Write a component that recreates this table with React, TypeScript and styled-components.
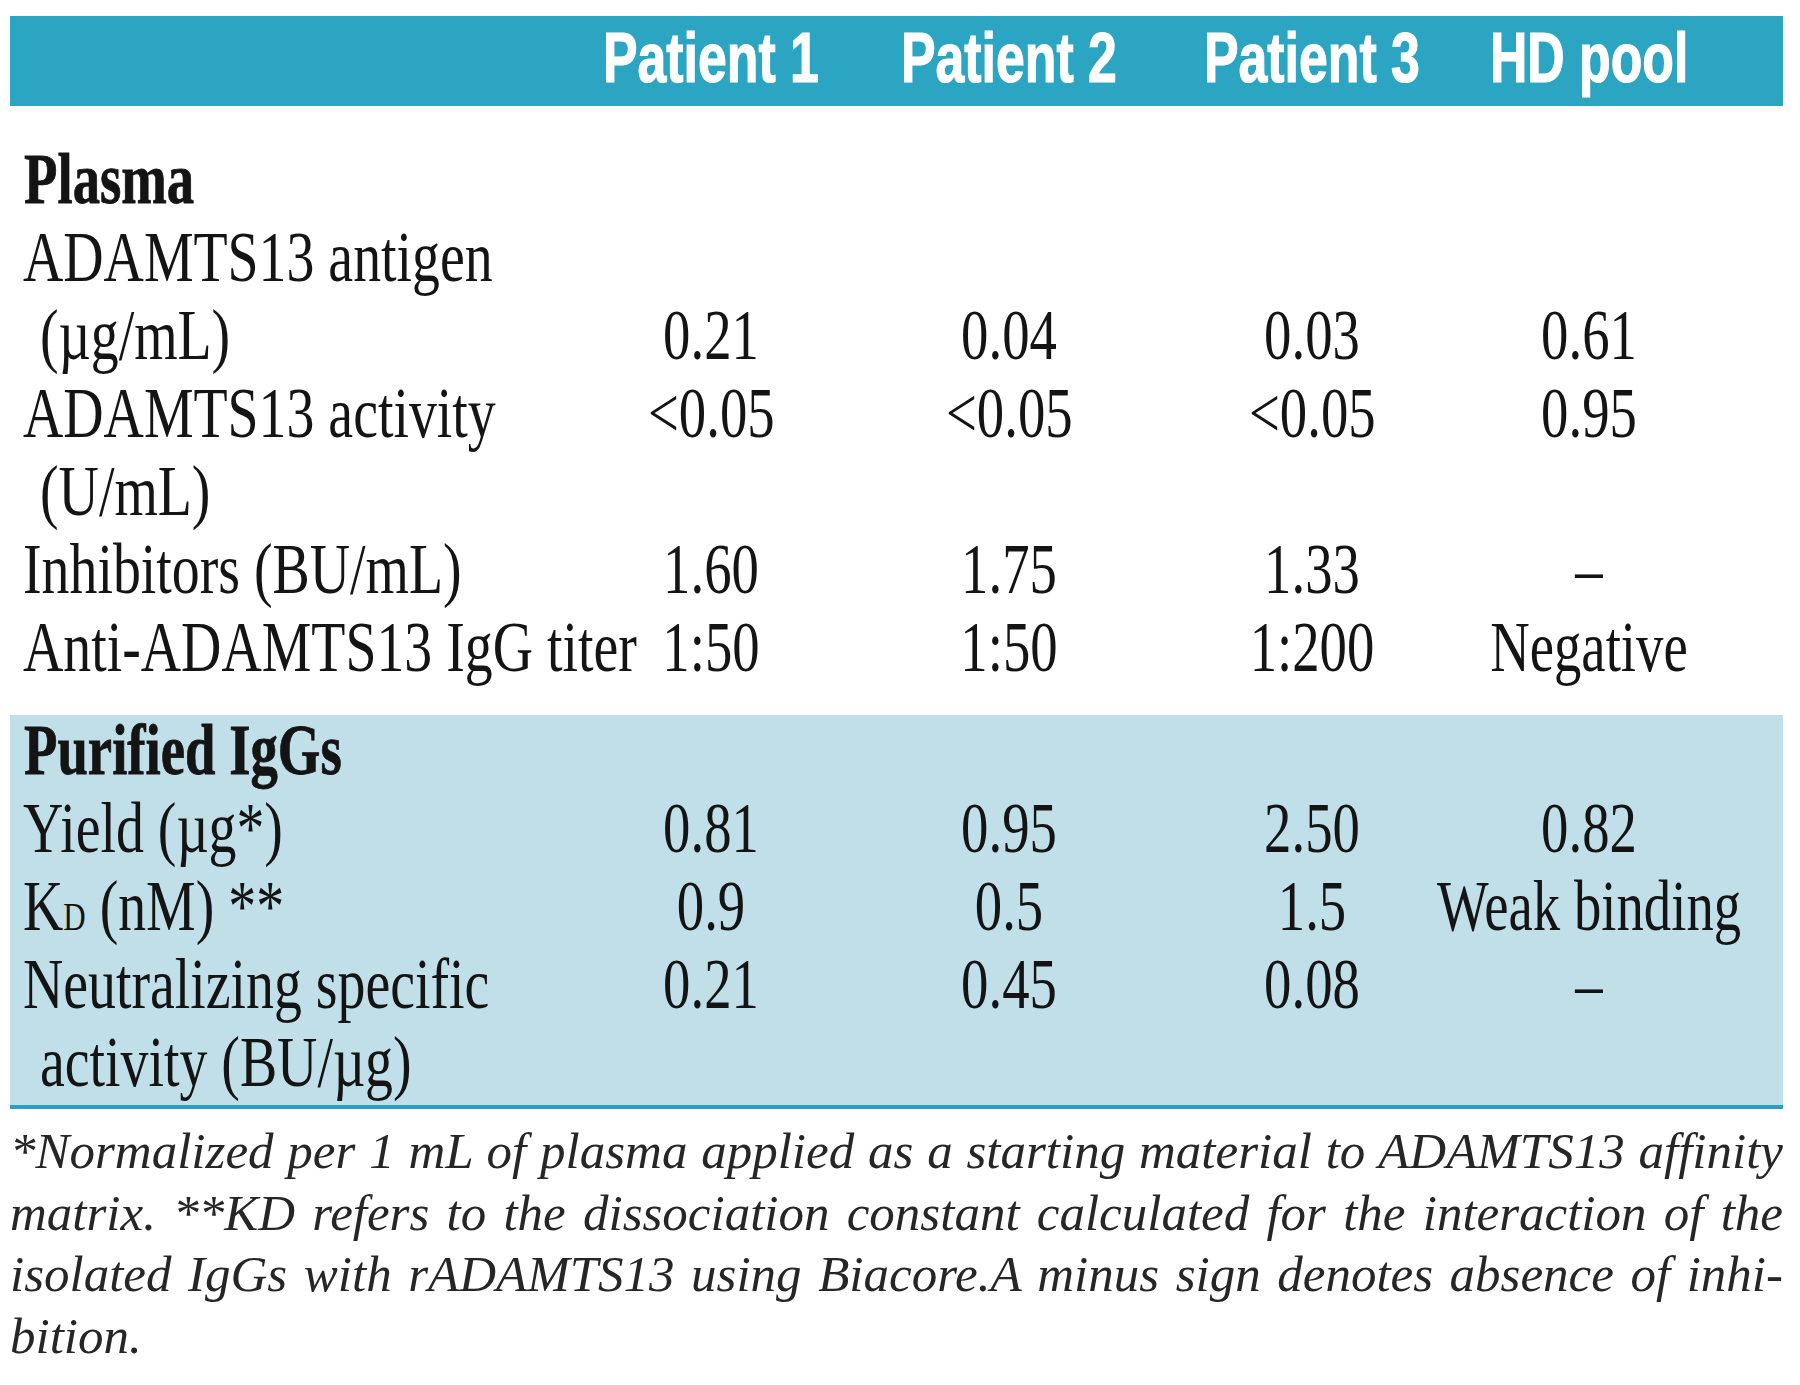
import React from 'react';
import styled, { createGlobalStyle } from 'styled-components';

const GlobalStyle = createGlobalStyle`
  html, body {
    margin: 0;
    padding: 0;
    background: #fff;
  }
  body {
    overflow: hidden;
  }
`;

// label column + 4 data columns, shared by header and rows
const COLS = '553px 296px 300px 306px 248px';

const Table = styled.div`
  width: 1773px;
  margin: 16px 0 0 10px;
  font-family: "Liberation Serif", "Times New Roman", serif;
  color: #141414;
`;

const HeaderBand = styled.div`
  display: grid;
  grid-template-columns: ${COLS};
  height: 90px;
  background: #2ca5c3;
  font-family: "Liberation Sans", Arial, sans-serif;
  font-weight: 700;
  font-size: 70px;
  line-height: 84px;
  color: #fff;
  -webkit-text-stroke: 1.2px #fff;
`;

const HeadCell = styled.div`
  display: flex;
  justify-content: center;
  white-space: nowrap;
`;

// the printed table uses condensed faces, so squeeze the installed ones
const Squeeze = styled.span<{ $x: number; $origin?: string }>`
  display: inline-block;
  flex: none;
  white-space: nowrap;
  transform: scaleX(${p => p.$x});
  transform-origin: ${p => p.$origin ?? 'center'};
`;

const Section = styled.div<{ $tone: 'plain' | 'blue' }>`
  background: ${p => (p.$tone === 'blue' ? '#c0dfe9' : '#fff')};
  padding: ${p => (p.$tone === 'blue' ? '0 0 4px' : '34px 0 29px')};
  border-bottom: ${p => (p.$tone === 'blue' ? '4px solid #2a9fc0' : 'none')};
`;

const SectionTitle = styled.div<{ $lh: number; $gap: number }>`
  padding-left: 14px;
  font-weight: 700;
  font-size: 72px;
  line-height: ${p => p.$lh}px;
  margin-bottom: ${p => p.$gap}px;
  white-space: nowrap;
  -webkit-text-stroke: 0.8px #141414;
`;

const Row = styled.div<{ $align: 'start' | 'end' }>`
  display: grid;
  grid-template-columns: ${COLS};
  align-items: ${p => p.$align};
  font-size: 72px;
  line-height: 78px;
`;

const Label = styled.div`
  padding-left: 13px;
`;

const LabelLine = styled.div<{ $indent?: boolean }>`
  padding-left: ${p => (p.$indent ? 17 : 0)}px;
  white-space: nowrap;
`;

const Value = styled.div`
  display: flex;
  justify-content: center;
  white-space: nowrap;
`;

const Sub = styled.span`
  font-size: 40px;
  line-height: 1;
`;

const Footnote = styled.div`
  margin-top: 12px;
  font-family: "Liberation Serif", "Times New Roman", serif;
  font-style: italic;
  font-size: 51px;
  line-height: 61.5px;
  color: #262626;
`;

const NoteLine = styled.div<{ $last?: boolean }>`
  text-align: justify;
  text-align-last: ${p => (p.$last ? 'left' : 'justify')};
`;

type RowData = {
  label: React.ReactNode[];
  values: string[];
  align?: 'start' | 'end';
};

const heads = ['Patient 1', 'Patient 2', 'Patient 3', 'HD pool'];

const plasma: RowData[] = [
  { label: ['ADAMTS13 antigen', '(µg/mL)'], values: ['0.21', '0.04', '0.03', '0.61'], align: 'end' },
  { label: ['ADAMTS13 activity', '(U/mL)'], values: ['<0.05', '<0.05', '<0.05', '0.95'], align: 'start' },
  { label: ['Inhibitors (BU/mL)'], values: ['1.60', '1.75', '1.33', '–'] },
  { label: ['Anti-ADAMTS13 IgG titer'], values: ['1:50', '1:50', '1:200', 'Negative'] },
];

const purified: RowData[] = [
  { label: ['Yield (µg*)'], values: ['0.81', '0.95', '2.50', '0.82'] },
  { label: [<>K<Sub>D</Sub> (nM) **</>], values: ['0.9', '0.5', '1.5', 'Weak binding'] },
  { label: ['Neutralizing specific', 'activity (BU/µg)'], values: ['0.21', '0.45', '0.08', '–'], align: 'start' },
];

const notes = [
  '*Normalized per 1 mL of plasma applied as a starting material to ADAMTS13 affinity',
  'matrix. **KD refers to the dissociation constant calculated for the interaction of the',
  'isolated IgGs with rADAMTS13 using Biacore.A minus sign denotes absence of inhi-',
  'bition.',
];

function DataRow({ row }: { row: RowData }) {
  return (
    <Row $align={row.align ?? 'start'}>
      <Label>
        {row.label.map((line, i) => (
          <LabelLine key={i} $indent={i > 0}>
            <Squeeze $x={0.775} $origin="left">{line}</Squeeze>
          </LabelLine>
        ))}
      </Label>
      {row.values.map((v, i) => (
        <Value key={i}>
          <Squeeze $x={0.76}>{v}</Squeeze>
        </Value>
      ))}
    </Row>
  );
}

export default function App() {
  return (
    <>
      <GlobalStyle />
      <Table>
        <HeaderBand>
          <div />
          {heads.map(h => (
            <HeadCell key={h}>
              <Squeeze $x={0.74}>{h}</Squeeze>
            </HeadCell>
          ))}
        </HeaderBand>

        <Section $tone="plain">
          <SectionTitle $lh={78} $gap={0}>
            <Squeeze $x={0.76} $origin="left">Plasma</Squeeze>
          </SectionTitle>
          {plasma.map((r, i) => <DataRow key={i} row={r} />)}
        </Section>

        <Section $tone="blue">
          <SectionTitle $lh={70} $gap={4}>
            <Squeeze $x={0.76} $origin="left">Purified IgGs</Squeeze>
          </SectionTitle>
          {purified.map((r, i) => <DataRow key={i} row={r} />)}
        </Section>

        <Footnote>
          {notes.map((n, i) => (
            <NoteLine key={i} $last={i === notes.length - 1}>{n}</NoteLine>
          ))}
        </Footnote>
      </Table>
    </>
  );
}
